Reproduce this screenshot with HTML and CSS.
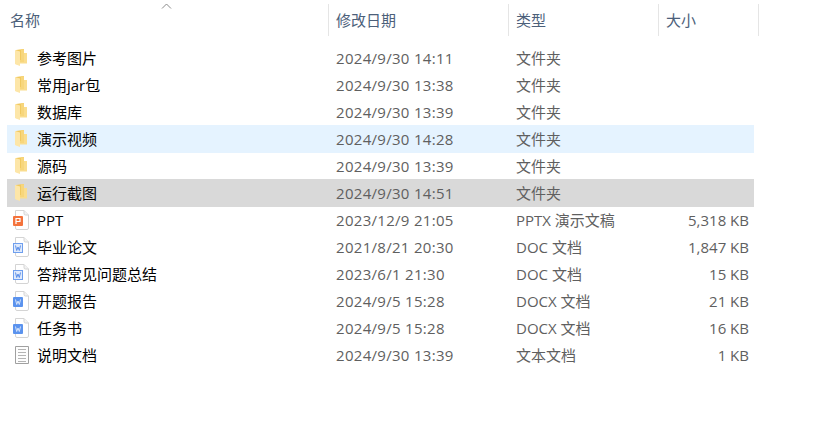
FILE: index.html
```html
<!DOCTYPE html>
<html lang="zh-CN">
<head>
  <meta charset="UTF-8" />
  <title>文件列表</title>
  <link rel="stylesheet" href="styles.css">
</head>
<body>
  <svg class="defs" width="0" height="0">
    <defs>
      <symbol id="folder" viewBox="0 0 18 20">
        <path d="M3 2 L10 1 H11 V15 H3 Z" fill="#f1c95f"/>
        <path d="M8 1.2 H11 V14 H3 V12 H8 Z" fill="#f7d67c"/>
        <path d="M11 5 H14 V15.5 H6 V14 H11 Z" fill="#fadd8e"/>
        <path d="M2 2 L7 3.5 V18 L3 16.5 L2 16 Z" fill="#fde6a8"/>
      </symbol>
      <symbol id="doc-page" viewBox="0 0 18 20">
        <path d="M2.5 .5 H11 L15.5 5 V18 Q15.5 19.5 14 19.5 H4 Q2.5 19.5 2.5 18 Z" fill="#fff" stroke="#d4d4d4"/>
        <path d="M11 .5 V3.5 Q11 5 12.5 5 H15.5" fill="#f2f2f2" stroke="#d4d4d4"/>
      </symbol>
    </defs>
  </svg>

  <div class="explorer">
    <div class="header">
      <span class="sort-caret"><svg width="11" height="6" viewBox="0 0 11 6"><path d="M1 5.5 L5.5 1 L10 5.5" fill="none" stroke="#8a8a8a"/></svg></span>
      <div class="col-head col-name">名称</div>
      <div class="col-head col-date">修改日期</div>
      <div class="col-head col-type">类型</div>
      <div class="col-head col-size">大小</div>
    </div>

    <div class="list">
      <div class="row">
        <div class="name"><svg class="ico" width="18" height="20"><use href="#folder"/></svg>参考图片</div>
        <div class="date">2024/9/30 14:11</div><div class="type">文件夹</div><div class="size"></div>
      </div>
      <div class="row">
        <div class="name"><svg class="ico" width="18" height="20"><use href="#folder"/></svg>常用jar包</div>
        <div class="date">2024/9/30 13:38</div><div class="type">文件夹</div><div class="size"></div>
      </div>
      <div class="row">
        <div class="name"><svg class="ico" width="18" height="20"><use href="#folder"/></svg>数据库</div>
        <div class="date">2024/9/30 13:39</div><div class="type">文件夹</div><div class="size"></div>
      </div>
      <div class="row hover">
        <div class="name"><svg class="ico" width="18" height="20"><use href="#folder"/></svg>演示视频</div>
        <div class="date">2024/9/30 14:28</div><div class="type">文件夹</div><div class="size"></div>
      </div>
      <div class="row">
        <div class="name"><svg class="ico" width="18" height="20"><use href="#folder"/></svg>源码</div>
        <div class="date">2024/9/30 13:39</div><div class="type">文件夹</div><div class="size"></div>
      </div>
      <div class="row selected">
        <div class="name"><svg class="ico" width="18" height="20"><use href="#folder"/></svg>运行截图</div>
        <div class="date">2024/9/30 14:51</div><div class="type">文件夹</div><div class="size"></div>
      </div>
      <div class="row">
        <div class="name">
          <svg class="ico" width="18" height="20"><use href="#doc-page"/><rect x="0" y="6" width="10" height="10" rx="1" fill="#f4733c"/><path d="M3 14 V8.5 H7 V11.5 H3" fill="none" stroke="#fff" stroke-width="1.2"/></svg>PPT
        </div>
        <div class="date">2023/12/9 21:05</div><div class="type">PPTX 演示文稿</div><div class="size">5,318 KB</div>
      </div>
      <div class="row">
        <div class="name">
          <svg class="ico" width="18" height="20"><use href="#doc-page"/><rect x=".5" y="6.5" width="9" height="9" fill="#dfeafc" stroke="#6f9fee"/><path d="M2.5 8.5 L3.7 13.5 L5 10 L6.3 13.5 L7.5 8.5" fill="none" stroke="#5b8fe8"/></svg>毕业论文
        </div>
        <div class="date">2021/8/21 20:30</div><div class="type">DOC 文档</div><div class="size">1,847 KB</div>
      </div>
      <div class="row">
        <div class="name">
          <svg class="ico" width="18" height="20"><use href="#doc-page"/><rect x=".5" y="6.5" width="9" height="9" fill="#dfeafc" stroke="#6f9fee"/><path d="M2.5 8.5 L3.7 13.5 L5 10 L6.3 13.5 L7.5 8.5" fill="none" stroke="#5b8fe8"/></svg>答辩常见问题总结
        </div>
        <div class="date">2023/6/1 21:30</div><div class="type">DOC 文档</div><div class="size">15 KB</div>
      </div>
      <div class="row">
        <div class="name">
          <svg class="ico" width="18" height="20"><use href="#doc-page"/><rect x="0" y="6" width="10" height="10" rx="1" fill="#5b93ee"/><path d="M2.5 8.5 L3.7 13.5 L5 10 L6.3 13.5 L7.5 8.5" fill="none" stroke="#d5e4fb"/></svg>开题报告
        </div>
        <div class="date">2024/9/5 15:28</div><div class="type">DOCX 文档</div><div class="size">21 KB</div>
      </div>
      <div class="row">
        <div class="name">
          <svg class="ico" width="18" height="20"><use href="#doc-page"/><rect x="0" y="6" width="10" height="10" rx="1" fill="#5b93ee"/><path d="M2.5 8.5 L3.7 13.5 L5 10 L6.3 13.5 L7.5 8.5" fill="none" stroke="#d5e4fb"/></svg>任务书
        </div>
        <div class="date">2024/9/5 15:28</div><div class="type">DOCX 文档</div><div class="size">16 KB</div>
      </div>
      <div class="row">
        <div class="name">
          <svg class="ico" width="18" height="20" viewBox="0 0 18 20"><path d="M2.5 1.5 H15.5 V18.5 H2.5 Z" fill="#fdfdfd" stroke="#a0a0a0"/><path d="M5 4.5 H13 M5 7.5 H13 M5 10.5 H13 M5 13.5 H13 M5 16.5 H13" stroke="#b4b4b4"/></svg>说明文档
        </div>
        <div class="date">2024/9/30 13:39</div><div class="type">文本文档</div><div class="size">1 KB</div>
      </div>
    </div>
  </div>
</body>
</html>
```

FILE: styles.css
```css
* {
  box-sizing: border-box;
  margin: 0;
  padding: 0;
}

body {
  background: #fff;
  font-family: "Open Sans", "Noto Sans CJK SC", sans-serif;
  font-size: 15px;
  overflow: hidden;
}

.defs {
  display: block;
  height: 0;
}

.explorer {
  width: 830px;
}

.header {
  position: relative;
  display: grid;
  grid-template-columns: 329px 180px 150px 100px;
  height: 44px;
  padding-top: 4px;
}

.sort-caret {
  position: absolute;
  left: 161px;
  top: 3px;
  line-height: 0;
}

.col-head {
  height: 32px;
  line-height: 32px;
  padding-left: 7px;
  color: #4c607a;
  border-right: 1px solid #e5e5e5;
}

.col-name {
  padding-left: 10px;
}

.row {
  display: grid;
  grid-template-columns: 322px 180px 150px 95px;
  width: 747px;
  height: 28px;
  margin-left: 7px;
  margin-bottom: -1px;
  line-height: 28px;
  white-space: nowrap;
}

.row.hover {
  background: #e5f3ff;
}

.row.selected {
  background: #d9d9d9;
}

.name {
  display: flex;
  align-items: center;
  color: #000;
}

.ico {
  flex: none;
  margin-left: 6px;
  margin-right: 6px;
}

.date,
.type,
.size {
  color: #5f5f5f;
}

.date {
  padding-left: 7px;
  letter-spacing: 0.3px;
}

.type {
  padding-left: 7px;
}

.size {
  text-align: right;
  padding-right: 5px;
}
```
